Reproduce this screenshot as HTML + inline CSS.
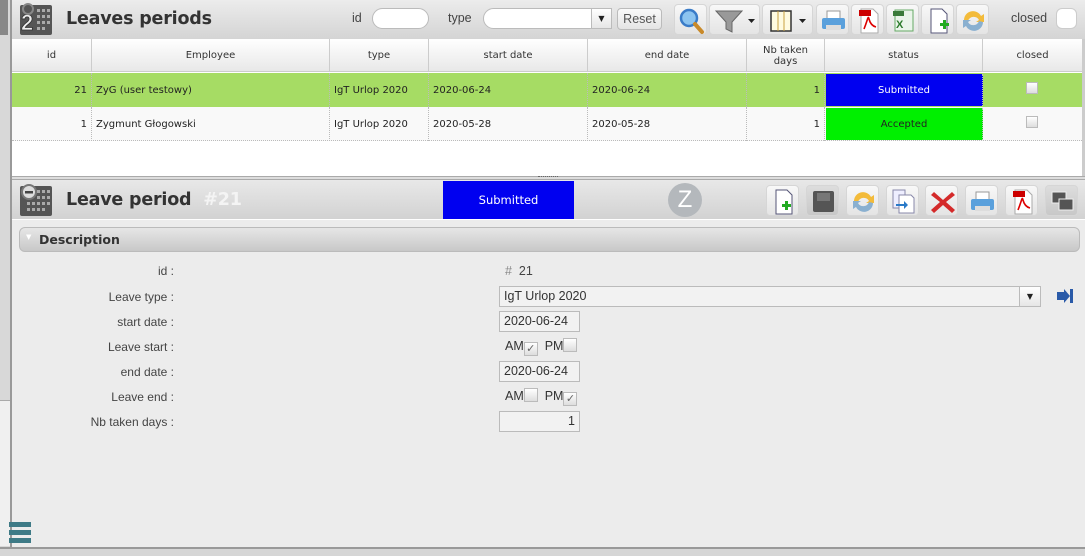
<!DOCTYPE html>
<html><head><meta charset="utf-8"><style>
*{box-sizing:border-box;margin:0;padding:0}
body{width:1085px;height:556px;overflow:hidden;background:#ececec;font-family:"DejaVu Sans","Liberation Sans",sans-serif;position:relative;color:#222}
.a{position:absolute}
.th{position:absolute;top:39px;height:33px;border-right:1px solid #ccc;font-size:10px;color:#333;text-align:center;display:flex;align-items:center;justify-content:center;line-height:11px}
.td{position:absolute;height:34px;font-size:10px;display:flex;align-items:center;padding:0 4px;border-right:1px dotted #bbb;color:#222}
.btn{position:absolute;width:33px;height:31px;border-radius:4px;background:linear-gradient(#f8f8f8,#e4e4e4);border:1px solid #d6d6d6}
.lbl{position:absolute;right:911px;font-size:12px;color:#444;font-family:"Liberation Sans",sans-serif}
.inp{position:absolute;height:21px;border:1px solid #bbb;background:#f2f2f2;font-size:12.5px;font-family:"Liberation Sans",sans-serif;color:#333;padding:2px 4px;line-height:15px}
.cb{display:inline-block;width:14px;height:14px;border:1px solid #bbb;background:linear-gradient(#fff,#ddd);vertical-align:-2px;font-size:11px;line-height:12px;text-align:center;color:#666}
.ck{position:absolute;font-size:12.5px;font-family:"Liberation Sans",sans-serif;color:#333}
</style></head><body>
<div class="a" style="left:0;top:0;width:10px;height:556px;background:#d8d8d8"></div>
<div class="a" style="left:0;top:0;width:8px;height:35px;background:#888"></div>
<div class="a" style="left:0;top:400px;width:10px;height:146px;background:#f0f0f0;border-top:1px solid #aaa"></div>
<div class="a" style="left:10px;top:0;width:2px;height:548px;background:#999"></div>
<div class="a" style="left:0;top:547px;width:1085px;height:9px;background:#d6d6d6;border-top:2px solid #999"></div>

<div class="a" style="left:12px;top:0;width:1073px;height:39px;background:linear-gradient(#ececec,#d4d4d4)"></div>
<svg class="a" style="left:19px;top:3px" width="34" height="32"><rect x="1" y="2" width="32" height="30" rx="2" fill="#555"/><g fill="#aaa"><rect x="18" y="6" width="3" height="3"/><rect x="23" y="6" width="3" height="3"/><rect x="28" y="6" width="3" height="3"/><rect x="18" y="12" width="3" height="3"/><rect x="23" y="12" width="3" height="3"/><rect x="28" y="12" width="3" height="3"/><rect x="18" y="18" width="3" height="3"/><rect x="23" y="18" width="3" height="3"/><rect x="28" y="18" width="3" height="3"/><rect x="18" y="24" width="3" height="3"/><rect x="23" y="24" width="3" height="3"/></g><text x="2" y="27" font-size="22" font-weight="bold" fill="#eee" stroke="#333" stroke-width=".8" font-family="Liberation Sans">2</text><circle cx="9" cy="6" r="5" fill="none" stroke="#888" stroke-width="2"/></svg>
<div class="a" style="left:66px;top:9px;font-size:17.5px;font-weight:bold;color:#333;font-family:'DejaVu Sans',sans-serif;letter-spacing:-.2px">Leaves periods</div>
<div class="a" style="left:352px;top:11px;font-size:12.5px;color:#444;font-family:'Liberation Sans'">id</div>
<div class="a" style="left:372px;top:8px;width:57px;height:21px;border:1px solid #bbb;border-radius:11px;background:#fff"></div>
<div class="a" style="left:448px;top:11px;font-size:12.5px;color:#444;font-family:'Liberation Sans'">type</div>
<div class="a" style="left:483px;top:8px;width:129px;height:21px;border:1px solid #bbb;border-radius:11px 0 0 11px;background:#fff"></div>
<div class="a" style="left:591px;top:8px;width:21px;height:21px;border:1px solid #bbb;background:linear-gradient(#fff,#e6e6e6);font-size:8px;text-align:center;line-height:19px">▼</div>
<div class="a" style="left:617px;top:8px;width:45px;height:22px;border:1px solid #bbb;border-radius:4px;background:linear-gradient(#fafafa,#e4e4e4);font-size:12.5px;color:#555;text-align:center;line-height:20px;font-family:'Liberation Sans'">Reset</div>
<div class="btn" style="left:674px;top:4px"><svg width="33" height="31"><circle cx="14" cy="13" r="8" fill="#8cc4f0" stroke="#3a7cc8" stroke-width="2.5"/><line x1="20" y1="19" x2="27" y2="27" stroke="#c98a2a" stroke-width="4" stroke-linecap="round"/></svg></div>
<div class="btn" style="left:709px;top:4px;width:51px"><svg width="51" height="31"><path d="M6 6h26l-10 11v10l-6-3v-7z" fill="#999" stroke="#666"/><path d="M38 14h7l-3.5 4z" fill="#222"/></svg></div>
<div class="btn" style="left:762px;top:4px;width:51px"><svg width="51" height="31"><rect x="8" y="6" width="20" height="20" fill="#fffbe0" stroke="#333" stroke-width="1.5"/><line x1="15" y1="6" x2="15" y2="26" stroke="#c8a040"/><line x1="21" y1="6" x2="21" y2="26" stroke="#c8a040"/><path d="M36 14h7l-3.5 4z" fill="#222"/></svg></div>
<div class="btn" style="left:816px;top:4px"><svg width="33" height="31"><rect x="10" y="6" width="13" height="8" fill="#fff" stroke="#999"/><rect x="5" y="13" width="23" height="11" rx="2" fill="#5aa0dc"/><rect x="9" y="20" width="15" height="5" fill="#ddd"/></svg></div>
<div class="btn" style="left:851px;top:4px"><svg width="33" height="31"><path d="M9 4h12l5 5v19H9z" fill="#fff" stroke="#aaa"/><rect x="7" y="5" width="12" height="6" fill="#c00"/><path d="M12 24c4-10 4-14 5-10s3 7 7 8" fill="none" stroke="#d00" stroke-width="1.6"/></svg></div>
<div class="btn" style="left:886px;top:4px"><svg width="33" height="31"><rect x="8" y="5" width="18" height="21" fill="#eaf4ea" stroke="#6a6"/><rect x="6" y="6" width="11" height="5" fill="#3a7a3a"/><text x="9" y="23" font-size="11" font-weight="bold" fill="#2a7a2a" font-family="Liberation Sans">X</text></svg></div>
<div class="btn" style="left:921px;top:4px"><svg width="33" height="31"><path d="M9 4h11l5 5v19H9z" fill="#fff" stroke="#557"/><path d="M18 18h3v-3h3v3h3v3h-3v3h-3v-3h-3z" fill="#2a2"/></svg></div>
<div class="btn" style="left:956px;top:4px"><svg width="33" height="31"><path d="M7 15a9 9 0 0 1 17-4l3-2v8h-8l3-2a6 6 0 0 0-11 1z" fill="#f3bb3a"/><path d="M26 17a9 9 0 0 1-17 4l-3 2v-8h8l-3 2a6 6 0 0 0 11-1z" fill="#8ab0d0"/></svg></div>
<div class="a" style="left:1011px;top:11px;font-size:12.5px;color:#444;font-family:'Liberation Sans'">closed</div>
<div class="a" style="left:1056px;top:8px;width:21px;height:21px;border:1px solid #ccc;border-radius:6px;background:#fff"></div>

<div class="a" style="left:12px;top:39px;width:1070px;height:137px;background:#fff"></div>
<div class="a" style="left:12px;top:39px;width:1070px;height:33px;background:linear-gradient(#fff,#e8e8e8);border-bottom:1px solid #ccc"></div>
<div class="th" style="left:12px;width:80px">id</div>
<div class="th" style="left:92px;width:238px">Employee</div>
<div class="th" style="left:330px;width:99px">type</div>
<div class="th" style="left:429px;width:159px">start date</div>
<div class="th" style="left:588px;width:159px">end date</div>
<div class="th" style="left:747px;width:78px">Nb taken<br>days</div>
<div class="th" style="left:825px;width:158px">status</div>
<div class="th" style="left:983px;width:99px;border-right:none">closed</div>
<div class="a" style="left:12px;top:73px;width:1070px;height:34px;background:#a6dc64"></div>
<div class="a" style="left:12px;top:107px;width:1070px;height:34px;background:#f9f9f9;border-bottom:1px dotted #bbb"></div>
<div class="td" style="left:12px;top:73px;width:80px;justify-content:flex-end">21</div>
<div class="td" style="left:92px;top:73px;width:238px">ZyG (user testowy)</div>
<div class="td" style="left:330px;top:73px;width:99px">IgT Urlop 2020</div>
<div class="td" style="left:429px;top:73px;width:159px">2020-06-24</div>
<div class="td" style="left:588px;top:73px;width:159px">2020-06-24</div>
<div class="td" style="left:747px;top:73px;width:78px;justify-content:flex-end">1</div>
<div class="td" style="left:826px;top:74px;width:157px;height:32px;background:#0000f0;color:#fff;justify-content:center">Submitted</div>
<div class="a" style="left:1026px;top:82px;width:12px;height:12px;border:1px solid #bbb;background:linear-gradient(#fff,#ddd)"></div>
<div class="td" style="left:12px;top:107px;width:80px;justify-content:flex-end">1</div>
<div class="td" style="left:92px;top:107px;width:238px">Zygmunt Głogowski</div>
<div class="td" style="left:330px;top:107px;width:99px">IgT Urlop 2020</div>
<div class="td" style="left:429px;top:107px;width:159px">2020-05-28</div>
<div class="td" style="left:588px;top:107px;width:159px">2020-05-28</div>
<div class="td" style="left:747px;top:107px;width:78px;justify-content:flex-end">1</div>
<div class="td" style="left:826px;top:108px;width:157px;height:32px;background:#00f000;color:#222;justify-content:center">Accepted</div>
<div class="a" style="left:1026px;top:116px;width:12px;height:12px;border:1px solid #bbb;background:linear-gradient(#fff,#ddd)"></div>
<div class="a" style="left:1082px;top:39px;width:3px;height:140px;background:#ccc"></div>
<div class="a" style="left:12px;top:176px;width:1073px;height:4px;background:#ddd;border-top:1px solid #aaa;border-bottom:1px solid #aaa"></div>
<div class="a" style="left:538px;top:176px;width:20px;height:2px;border-top:1px dotted #666"></div>

<div class="a" style="left:12px;top:180px;width:1073px;height:40px;background:linear-gradient(#e8e8e8,#d2d2d2);border-bottom:1px solid #fff"></div>
<svg class="a" style="left:19px;top:183px" width="34" height="34"><rect x="1" y="3" width="32" height="30" rx="2" fill="#555"/><g fill="#aaa"><rect x="18" y="7" width="3" height="3"/><rect x="23" y="7" width="3" height="3"/><rect x="28" y="7" width="3" height="3"/><rect x="18" y="13" width="3" height="3"/><rect x="23" y="13" width="3" height="3"/><rect x="28" y="13" width="3" height="3"/><rect x="8" y="19" width="3" height="3"/><rect x="13" y="19" width="3" height="3"/><rect x="18" y="19" width="3" height="3"/><rect x="23" y="19" width="3" height="3"/><rect x="28" y="19" width="3" height="3"/><rect x="8" y="25" width="3" height="3"/><rect x="13" y="25" width="3" height="3"/><rect x="18" y="25" width="3" height="3"/><rect x="23" y="25" width="3" height="3"/></g><circle cx="10" cy="9" r="7" fill="#ddd" stroke="#777" stroke-width="2"/><rect x="6" y="8" width="8" height="2.5" fill="#444"/></svg>
<div class="a" style="left:66px;top:190px;font-size:17.5px;font-weight:bold;color:#333;font-family:'DejaVu Sans',sans-serif;letter-spacing:-.2px">Leave period <span style="color:#f4f4f4;margin-left:6px">#21</span></div>
<div class="a" style="left:443px;top:181px;width:131px;height:38px;background:#0000f0;color:#fff;font-size:11.5px;text-align:center;line-height:38px">Submitted</div>
<div class="a" style="left:668px;top:183px;width:34px;height:34px;border-radius:50%;background:#b4b8bc;color:#fff;font-size:24px;text-align:center;line-height:34px;font-family:'Liberation Sans'">Z</div>
<div class="btn" style="left:766px;top:185px;height:31px"><svg width="33" height="31"><path d="M9 4h11l5 5v19H9z" fill="#fff" stroke="#557"/><path d="M15 18h3v-3h3v3h3v3h-3v3h-3v-3h-3z" fill="#2a2"/></svg></div>
<div class="btn" style="left:806px;top:185px;background:linear-gradient(#ddd,#c8c8c8)"><svg width="33" height="31"><rect x="6" y="5" width="21" height="21" rx="2" fill="#555"/><rect x="10" y="7" width="13" height="8" fill="#777"/></svg></div>
<div class="btn" style="left:846px;top:185px"><svg width="33" height="31"><path d="M7 15a9 9 0 0 1 17-4l3-2v8h-8l3-2a6 6 0 0 0-11 1z" fill="#f3bb3a"/><path d="M26 17a9 9 0 0 1-17 4l-3 2v-8h8l-3 2a6 6 0 0 0 11-1z" fill="#8ab0d0"/></svg></div>
<div class="btn" style="left:886px;top:185px"><svg width="33" height="31"><path d="M6 4h12v18H6z" fill="#eef" stroke="#88a"/><path d="M12 9h12l3 3v15H12z" fill="#fff" stroke="#88a"/><path d="M9 18h8v-3l4 4-4 4v-3H9z" fill="#2a7ac8"/></svg></div>
<div class="btn" style="left:925px;top:185px"><svg width="33" height="31"><path d="M8 6l9 8 9-8 3 3-9 7 9 8-3 3-9-8-9 8-3-3 9-8-9-7z" fill="#d42a2a"/></svg></div>
<div class="btn" style="left:965px;top:185px"><svg width="33" height="31"><rect x="10" y="6" width="13" height="8" fill="#fff" stroke="#999"/><rect x="5" y="13" width="23" height="11" rx="2" fill="#5aa0dc"/><rect x="9" y="20" width="15" height="5" fill="#ddd"/></svg></div>
<div class="btn" style="left:1005px;top:185px"><svg width="33" height="31"><path d="M9 4h12l5 5v19H9z" fill="#fff" stroke="#aaa"/><rect x="7" y="5" width="12" height="6" fill="#c00"/><path d="M12 24c4-10 4-14 5-10s3 7 7 8" fill="none" stroke="#d00" stroke-width="1.6"/></svg></div>
<div class="btn" style="left:1045px;top:185px;background:linear-gradient(#ddd,#c8c8c8)"><svg width="33" height="31"><rect x="6" y="6" width="14" height="11" fill="#555" stroke="#eee"/><rect x="13" y="13" width="14" height="11" fill="#555" stroke="#eee"/></svg></div>

<div class="a" style="left:19px;top:227px;width:1061px;height:25px;border-radius:6px;background:linear-gradient(#e6e6e6,#c8c8c8);border:1px solid #bbb"></div>
<div class="a" style="left:26px;top:233px;width:8px;height:12px;font-size:7px;color:#fff">▼</div>
<div class="a" style="left:39px;top:232px;font-size:12.5px;font-weight:bold;color:#333;font-family:'DejaVu Sans'">Description</div>

<div class="lbl" style="top:264px">id :</div>
<div class="lbl" style="top:290px">Leave type :</div>
<div class="lbl" style="top:315px">start date :</div>
<div class="lbl" style="top:340px">Leave start :</div>
<div class="lbl" style="top:365px">end date :</div>
<div class="lbl" style="top:390px">Leave end :</div>
<div class="lbl" style="top:415px">Nb taken days :</div>
<div class="ck" style="left:505px;top:264px;color:#444"><span style="color:#888">#</span>&nbsp; 21</div>
<div class="inp" style="left:499px;top:286px;width:542px">IgT Urlop 2020</div>
<div class="a" style="left:1019px;top:286px;width:22px;height:21px;border:1px solid #bbb;background:linear-gradient(#fff,#e6e6e6);font-size:8px;text-align:center;line-height:19px">▼</div>
<svg class="a" style="left:1056px;top:288px" width="18" height="16"><path d="M1 4h7V1l6 7-6 7v-3H1z" fill="#2a5aa8"/><rect x="14" y="1" width="3" height="14" fill="#2a5aa8"/></svg>
<div class="inp" style="left:499px;top:311px;width:81px">2020-06-24</div>
<div class="ck" style="left:505px;top:338px">AM<span class="cb">✓</span> &nbsp;PM<span class="cb"></span></div>
<div class="inp" style="left:499px;top:361px;width:81px">2020-06-24</div>
<div class="ck" style="left:505px;top:388px">AM<span class="cb"></span> &nbsp;PM<span class="cb">✓</span></div>
<div class="inp" style="left:499px;top:411px;width:81px;text-align:right">1</div>

<div class="a" style="left:9px;top:522px;width:22px;height:5px;background:#3e7a86"></div>
<div class="a" style="left:9px;top:530px;width:22px;height:5px;background:#3e7a86"></div>
<div class="a" style="left:9px;top:538px;width:22px;height:5px;background:#3e7a86"></div>
</body></html>
